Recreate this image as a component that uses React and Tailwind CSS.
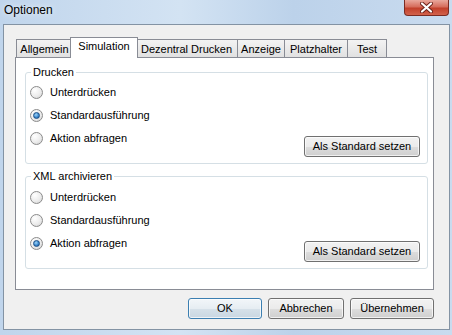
import React from "react";

function Radio({ label, checked }) {
    return (
        <div className="flex items-center h-[23px] gap-[7px]">
            <span className="w-[13px] h-[13px] rounded-full border border-[#8b8b8b] bg-[radial-gradient(circle_at_35%_30%,#ffffff,#ececec_55%,#cfcfcf)] flex items-center justify-center">
                {checked && (
                    <span className="w-[7px] h-[7px] rounded-full border border-[#1b4f86] bg-[radial-gradient(circle_at_40%_35%,#9fd5f7,#3d8ad0_55%,#15508f)]" />
                )}
            </span>
            <span>{label}</span>
        </div>
    );
}

function Button({ children, className = "", isDefault = false }) {
    return (
        <button
            className={
                "h-[21px] rounded-[3px] border text-[11px] leading-none text-black shadow-[inset_0_0_0_1px_rgba(255,255,255,0.7)] " +
                (isDefault
                    ? "border-[#3c7fb1] bg-[linear-gradient(180deg,#f2f6f9_0%,#e6edf2_50%,#d6e1e9_51%,#c9d7e2_100%)] "
                    : "border-[#707070] bg-[linear-gradient(180deg,#f2f2f2_0%,#ebebeb_50%,#dddddd_51%,#cfcfcf_100%)] ") +
                className
            }
        >
            {children}
        </button>
    );
}

function Group({ title, selected, className = "" }) {
    const options = ["Unterdrücken", "Standardausführung", "Aktion abfragen"];
    return (
        <fieldset className={"w-[403px] m-0 p-0 border border-[#d5dfe5] rounded-[3px] " + className}>
            <legend className="ml-[5px] px-[2px] leading-[15px]">{title}</legend>
            <div className={"flex justify-between items-end pb-[6px] pl-[4px] pr-[7px] " + (selected === 1 ? "pt-[1px]" : "pt-[2px]")}>
                <div className="flex flex-col pb-[7px]">
                    {options.map((o, i) => (
                        <Radio key={o} label={o} checked={i === selected} />
                    ))}
                </div>
                <Button className="w-[116px]">Als Standard setzen</Button>
            </div>
        </fieldset>
    );
}

export default function App() {
    return (
        <div className="w-[452px] h-[335px] overflow-hidden bg-[linear-gradient(90deg,#c0d5ec_0%,#d3e3f3_40%,#bcd2ea_65%,#c9dbef_100%)] font-['Liberation_Sans',Arial,sans-serif] text-[11px] text-black">
            <div className="h-[24px] flex justify-between items-start">
                <span className="pl-[4px] pt-[3px] text-[12px] leading-[15px] [text-shadow:0_0_6px_rgba(255,255,255,0.9)]">
                    Optionen
                </span>
                <div className="mr-[3px] w-[45px] h-[16px] rounded-b-[4px] border border-t-0 border-[#7b2b22] bg-[linear-gradient(180deg,#e9a89c_0%,#d66d5c_45%,#c2402b_55%,#d2624c_100%)] flex items-center justify-center">
                    <svg width="13" height="11" viewBox="0 0 13 11">
                        <path d="M2 1.5 L11 9.5 M11 1.5 L2 9.5" stroke="#6b2118" strokeWidth="4" strokeLinecap="round" />
                        <path d="M2 1.5 L11 9.5 M11 1.5 L2 9.5" stroke="#ffffff" strokeWidth="2.2" strokeLinecap="round" />
                    </svg>
                </div>
            </div>

            <div className="ml-[3px] w-[447px] h-[306px] border border-[#8393a4] bg-[#f0f0f0] pt-[12px] pl-[11px]">
                <div className="flex items-end h-[20px] pl-[1px]">
                    <div className="w-[57px] h-[18px] border border-b-0 border-[#898c95] bg-[linear-gradient(180deg,#f3f3f3,#e1e1e1)] text-center pt-[2px] leading-[15px]">
                        Allgemein
                    </div>
                    <div className="relative z-10 ml-[-3px] mb-[-1px] w-[68px] h-[21px] border border-b-0 border-[#898c95] bg-white text-center pt-[1px] leading-[15px]">
                        Simulation
                    </div>
                    <div className="ml-[-3px] w-[103px] h-[18px] border border-b-0 border-[#898c95] bg-[linear-gradient(180deg,#f3f3f3,#e1e1e1)] text-center pt-[2px] leading-[15px]">
                        Dezentral Drucken
                    </div>
                    <div className="ml-[-1px] w-[48px] h-[18px] border border-b-0 border-[#898c95] bg-[linear-gradient(180deg,#f3f3f3,#e1e1e1)] text-center pt-[2px] leading-[15px]">
                        Anzeige
                    </div>
                    <div className="ml-[-1px] w-[64px] h-[18px] border border-b-0 border-[#898c95] bg-[linear-gradient(180deg,#f3f3f3,#e1e1e1)] text-center pt-[2px] leading-[15px]">
                        Platzhalter
                    </div>
                    <div className="ml-[-1px] w-[40px] h-[18px] border border-b-0 border-[#898c95] bg-[linear-gradient(180deg,#f3f3f3,#e1e1e1)] text-center pt-[2px] leading-[15px]">
                        Test
                    </div>
                </div>

                <div className="w-[419px] h-[233px] border border-[#898c95] bg-white pt-[7px] pl-[9px]">
                    <Group title="Drucken" selected={1} />
                    <Group title="XML archivieren" selected={2} className="mt-[5px]" />
                </div>

                <div className="mt-[8px] flex justify-end gap-[6px] pr-[15px]">
                    <Button isDefault className="w-[74px]">OK</Button>
                    <Button className="w-[76px]">Abbrechen</Button>
                    <Button className="w-[84px]">Übernehmen</Button>
                </div>
            </div>
        </div>
    );
}
